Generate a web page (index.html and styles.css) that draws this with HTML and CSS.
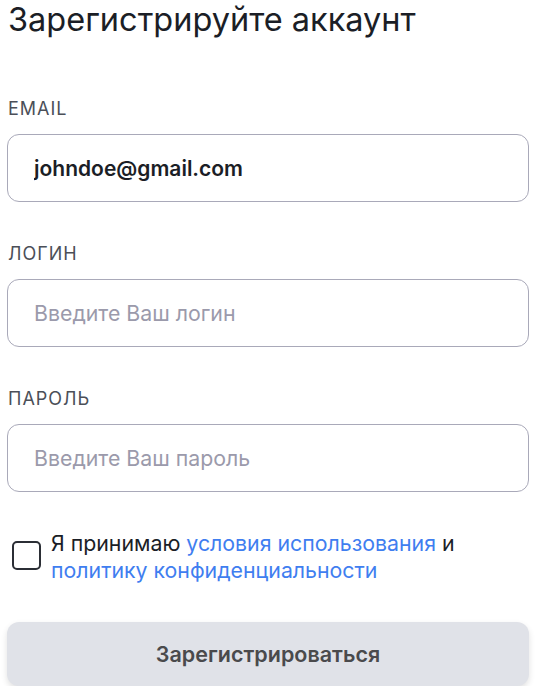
FILE: index.html
```html
<!DOCTYPE html>
<html lang="ru">
<head>
<meta charset="utf-8">
<link rel="stylesheet" href="styles.css">
</head>
<body>
<form class="form">
  <h1 class="title">Зарегистрируйте аккаунт</h1>
  <div class="field field-first">
    <label class="label">EMAIL</label>
    <input class="input" type="text" value="johndoe@gmail.com">
  </div>
  <div class="field">
    <label class="label">ЛОГИН</label>
    <input class="input" type="text" placeholder="Введите Ваш логин">
  </div>
  <div class="field">
    <label class="label">ПАРОЛЬ</label>
    <input class="input" type="password" placeholder="Введите Ваш пароль">
  </div>
  <div class="agree">
    <span class="checkbox"></span>
    <p class="agree-text">Я принимаю <a class="link" href="#">условия использования</a> и <a class="link" href="#">политику конфиденциальности</a></p>
  </div>
  <button class="submit" type="button">Зарегистрироваться</button>
</form>
</body>
</html>
```
FILE: styles.css
```css
* { box-sizing: border-box; }
html, body { margin: 0; padding: 0; background: #fff; }
body {
  font-family: Inter, "Noto Sans", sans-serif;
  color: #1b1e26;
}
.form {
  width: 522px;
  margin-left: 7px;
  padding-top: 1px;
  display: flex;
  flex-direction: column;
}
.title {
  margin: 0 0 0 1px;
  font-size: 32.5px;
  line-height: 38px;
  font-weight: 400;
  color: #1b1e26;
}
.field {
  display: flex;
  flex-direction: column;
  margin-top: 40.5px;
}
.field-first { margin-top: 58.5px; }
.label {
  font-size: 18px;
  line-height: 22px;
  letter-spacing: 1px;
  color: #4b4f58;
  margin-left: 1px;
  margin-bottom: 14.5px;
}
.input {
  height: 68px;
  width: 100%;
  border: 1px solid #a9a9b9;
  border-radius: 12px;
  padding: 0 0 0 26px;
  font-family: Inter, "Noto Sans", sans-serif;
  font-size: 21px;
  font-weight: 600;
  color: #1b1e26;
  background: #fff;
  outline: none;
}
.input::placeholder {
  color: #9b9aab;
  font-weight: 400;
  font-size: 21.3px;
}
.agree {
  display: flex;
  align-items: flex-start;
  margin-top: 38px;
}
.checkbox {
  flex: none;
  width: 29px;
  height: 29px;
  border: 2px solid #2b2e35;
  border-radius: 5px;
  margin: 11px 0 0 5px;
}
.agree-text {
  margin: 0 0 0 10px;
  font-size: 21.3px;
  line-height: 27px;
  color: #1b1e26;
}
.link {
  color: #3f7ef0;
  text-decoration: none;
}
.submit {
  margin-top: 38px;
  height: 64px;
  width: 100%;
  border: none;
  border-radius: 12px;
  background: #e0e2e8;
  box-shadow: 0 3px 6px rgba(0, 0, 0, 0.12);
  font-family: Inter, "Noto Sans", sans-serif;
  font-size: 21.5px;
  font-weight: 600;
  color: #4a4a4c;
}
```
